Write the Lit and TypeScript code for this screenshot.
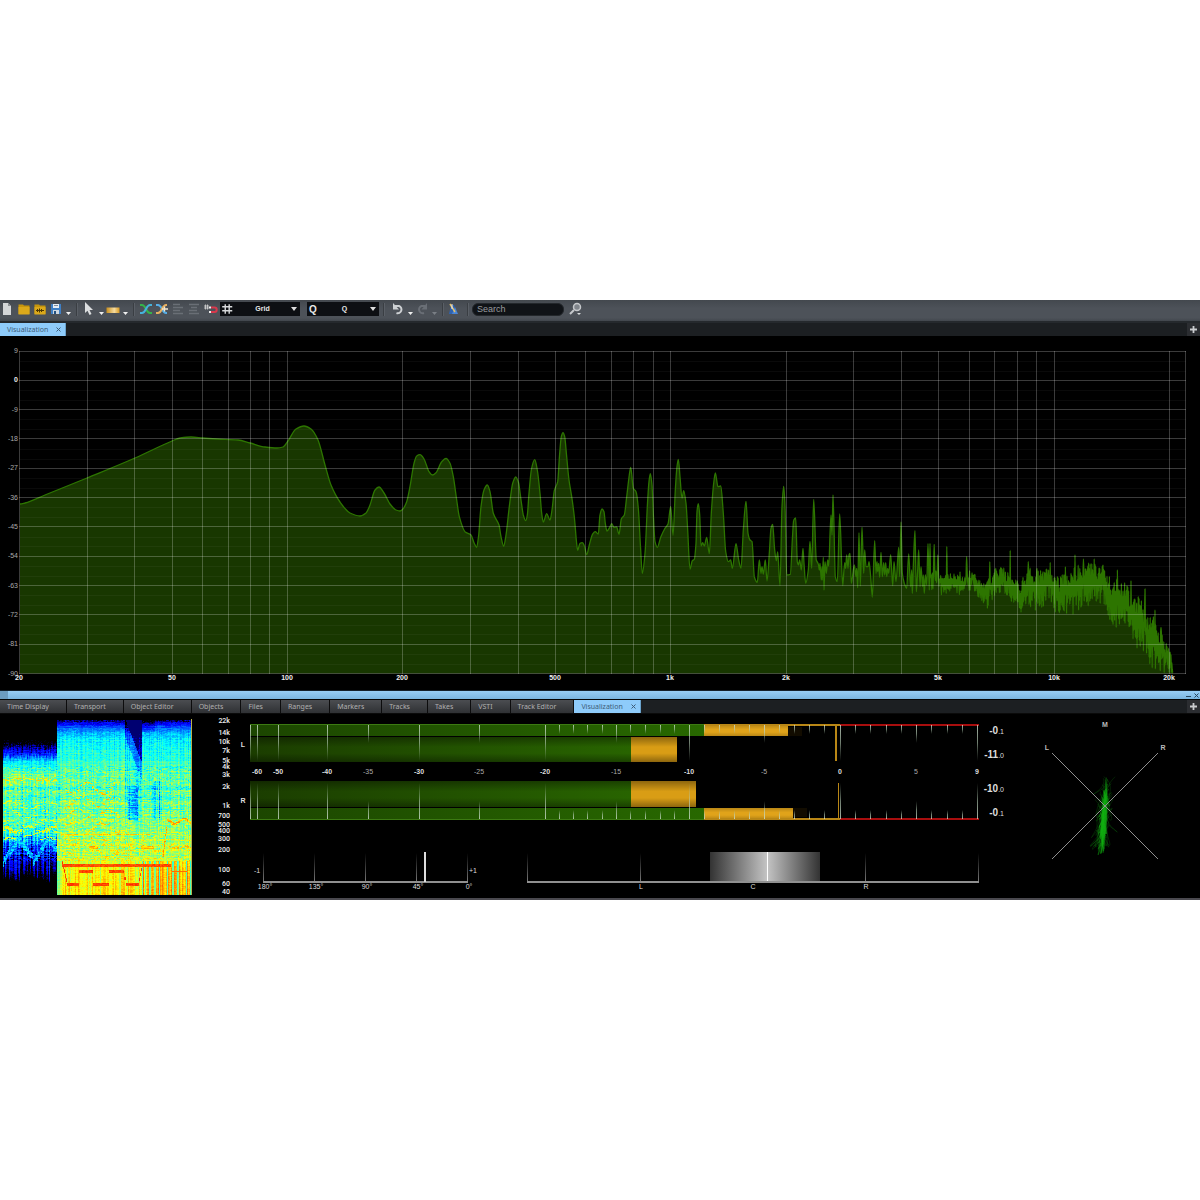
import { LitElement, html, svg, css } from "lit";
import { customElement, state } from "lit/decorators.js";

type Pt = [number, number];

/* Small seeded generator, so that every drawing is stable between loads. */
function seeded(seed: number): () => number {
  let s = seed;
  return () => {
    s = (s * 1664525 + 1013904223) % 4294967296;
    return s / 4294967296;
  };
}

function lerpTable(table: number[][], x: number, col: number): number {
  if (x <= table[0][0]) return table[0][col];
  for (let i = 1; i < table.length; i++) {
    if (x <= table[i][0]) {
      const a = table[i - 1];
      const b = table[i];
      return a[col] + ((b[col] - a[col]) * (x - a[0])) / (b[0] - a[0]);
    }
  }
  return table[table.length - 1][col];
}

/* ---------- Spectrum curve data ---------- */

const LOW_BAND: Pt[] = [
  [20, 504], [25, 503], [45, 495], [87, 478], [135, 458], [172, 441], [180, 438], [191, 437], [203, 438], [217, 439],
  [238, 440], [250, 443], [265, 447], [277, 448], [283, 447], [288, 441], [296, 429], [304, 426], [311, 429],
  [318, 440], [325, 465], [331, 485], [340, 502], [350, 513], [360, 516], [366, 513], [370, 505], [375, 490],
  [379, 487], [384, 493], [390, 504], [396, 510], [400, 511],
];

/* Mid bands are stored in thirds of a unit relative to an origin. */
const MID_BAND: Pt[] = [
  [8, 268], [20, 245], [30, 200], [42, 130], [50, 108], [60, 104], [72, 117], [87, 155], [97, 165], [108, 158],
  [125, 125], [138, 115], [150, 130], [160, 170], [170, 240], [178, 290], [195, 335], [213, 345], [222, 368],
  [230, 382], [236, 345], [243, 260], [252, 210], [262, 195], [270, 215], [280, 280], [297, 315], [303, 350],
  [311, 379], [318, 345], [328, 260], [338, 190], [347, 171], [356, 190], [363, 240], [370, 285], [377, 302],
  [382, 285], [387, 220], [394, 150], [404, 119], [412, 150], [420, 220], [425, 280], [430, 306], [440, 281],
  [450, 300], [456, 270], [463, 212], [473, 185], [479, 100], [484, 50], [489, 38], [494, 50], [500, 110],
  [507, 180], [515, 230], [523, 290], [529, 360], [533, 391], [540, 370], [547, 368], [553, 377], [560, 404],
  [568, 375], [578, 342], [586, 335], [595, 342], [600, 285], [606, 267], [612, 275], [616, 310], [621, 333],
  [629, 322], [635, 311], [642, 322], [650, 321], [657, 343], [664, 297], [673, 285], [680, 230], [688, 165],
  [692, 142], [700, 205], [708, 215], [715, 265], [722, 390], [727, 460], [735, 400], [742, 260], [747, 185],
  [751, 161], [756, 195], [760, 280], [765, 365], [772, 382], [782, 352], [795, 325], [804, 312],
];

const HIGH_BAND: Pt[] = [
  [32, 200], [39, 286], [46, 150], [51, 80], [55, 58], [60, 110], [66, 175], [71, 152], [78, 190], [83, 270],
  [90, 387], [97, 362], [103, 358], [108, 310], [111, 215], [115, 191], [119, 225], [123, 318], [128, 308],
  [133, 318], [140, 292], [148, 341], [154, 220], [160, 140], [166, 99], [174, 140], [182, 138], [190, 220],
  [197, 335], [205, 365], [212, 360], [217, 385], [228, 311], [236, 360], [243, 384], [250, 270], [258, 184],
  [264, 280], [270, 300], [276, 305], [283, 410], [292, 427], [298, 360], [303, 400], [306, 380], [310, 402],
  [316, 360], [321, 423], [328, 340], [333, 265], [338, 253], [344, 330], [349, 362], [353, 336], [360, 437],
  [366, 200], [371, 139], [375, 200], [380, 405], [391, 403], [397, 300], [401, 241], [407, 234], [412, 365],
  [415, 375], [419, 360], [424, 390], [429, 325], [432, 370], [437, 430], [445, 390], [450, 304], [455, 385],
  [461, 178], [469, 360], [475, 372], [478, 390], [480, 370], [484, 420], [486, 380], [487, 420], [490, 352],
  [492, 450], [495, 365], [499, 400], [503, 360], [506, 378], [513, 225], [516, 285], [519, 165], [526, 410],
  [532, 425], [539, 222], [548, 437], [554, 368], [557, 385], [560, 345], [564, 385], [567, 345], [570, 340],
  [574, 430], [583, 375], [588, 410], [590, 385], [593, 443], [597, 278], [601, 438], [606, 262], [611, 400],
  [614, 330], [618, 380], [624, 380], [627, 365], [632, 410], [637, 472], [644, 302], [648, 400], [651, 365],
  [653, 395], [656, 370], [659, 412], [663, 337], [667, 410], [671, 368], [674, 405], [677, 368], [680, 410],
  [683, 385], [686, 400], [692, 344], [698, 437], [702, 365], [708, 425], [716, 322], [719, 410], [723, 246],
  [727, 400], [733, 430], [740, 445], [746, 342], [752, 440], [755, 390], [757, 460], [760, 380], [765, 272],
  [769, 455], [773, 390], [776, 330], [780, 440], [783, 380], [788, 440], [790, 405], [793, 460], [796, 405],
  [800, 435], [804, 311], [808, 450],
];

const NOISE_RANGE = [
  [30, 190, 275], [60, 205, 285], [100, 215, 280], [135, 215, 290], [160, 205, 270], [170, 240, 290], [200, 240, 330],
  [225, 205, 290], [250, 195, 280], [270, 225, 305], [300, 245, 345], [325, 200, 320], [350, 210, 345],
  [390, 195, 305], [410, 230, 350], [440, 210, 350], [465, 185, 345], [490, 185, 315], [520, 190, 325],
  [550, 195, 310], [580, 230, 390], [610, 245, 370], [640, 262, 440], [665, 290, 465], [690, 335, 505],
  [712, 365, 520], [740, 425, 520], [757, 470, 520],
];

const NOISE_PEAKS: Pt[] = [
  [24, 130], [42, 133], [53, 165], [79, 139], [138, 170], [209, 185], [270, 151], [324, 185], [350, 205], [390, 187],
  [436, 200], [464, 165], [490, 177], [522, 177], [548, 195], [591, 210], [633, 242], [675, 267], [705, 330],
  [722, 382], [757, 466],
];

function spectrumPoints(): Pt[] {
  const pts: Pt[] = [...LOW_BAND];
  MID_BAND.forEach(([x, y]) => pts.push([400 + x / 3, 420 + y / 3]));
  HIGH_BAND.forEach(([x, y]) => pts.push([660 + x / 3, 440 + y / 3]));
  const rnd = seeded(41);
  let up = true;
  let next = 0;
  for (let x = 30; x < 757; x += x < 160 ? 1.8 : 1.2) {
    const hi = lerpTable(NOISE_RANGE, x, 1);
    const lo = lerpTable(NOISE_RANGE, x, 2);
    const span = lo - hi;
    let y = up ? hi + span * 0.42 * rnd() : lo - span * 0.5 * rnd();
    if (next < NOISE_PEAKS.length && x >= NOISE_PEAKS[next][0]) {
      y = NOISE_PEAKS[next][1];
      next++;
    }
    pts.push([920 + x / 3, Math.min(673, 500 + y / 3)]);
    up = !up;
  }
  pts.push([1173, 673]);
  return pts;
}

/* Monotone cubic path: peaks stay rounded and never overshoot. */
function curvePath(pts: Pt[]): string {
  const n = pts.length;
  const d: number[] = [];
  for (let i = 0; i < n - 1; i++) d.push((pts[i + 1][1] - pts[i][1]) / (pts[i + 1][0] - pts[i][0] || 0.1));
  const m = pts.map((_, i) => {
    if (i === 0 || i === n - 1 || d[i - 1] * d[i] <= 0) return 0;
    return (2 * d[i - 1] * d[i]) / (d[i - 1] + d[i]);
  });
  let out = `M${pts[0][0]} ${pts[0][1]}`;
  for (let i = 0; i < n - 1; i++) {
    const [x0, y0] = pts[i];
    const [x1, y1] = pts[i + 1];
    const h = (x1 - x0) / 3;
    out += `C${(x0 + h).toFixed(1)} ${(y0 + m[i] * h).toFixed(1)} ${(x1 - h).toFixed(1)} ${(y1 - m[i + 1] * h).toFixed(1)} ${x1.toFixed(1)} ${y1.toFixed(1)}`;
  }
  return out;
}

const freqX = (f: number) => 19.5 + 383.4 * Math.log10(f / 20);
const levelY = (db: number) => 351 + (9 - db) * 3.258;

@customElement("spectrum-chart")
export class SpectrumChart extends LitElement {
  static styles = css`
    :host { display: block; background: #000; }
    svg { display: block; width: 100%; height: auto; }
    .major { stroke: #fff; stroke-opacity: 0.23; stroke-width: 1; }
    .minor { stroke: #fff; stroke-opacity: 0.04; stroke-width: 1; }
    .area { fill: #183700; }
    .curve { fill: none; stroke: #2d7500; stroke-width: 1.3; stroke-linejoin: round; }
    .level { font: 7px "Liberation Sans", Arial, sans-serif; fill: #aaa; text-anchor: end; }
    .level.zero { font-weight: 700; fill: #eee; }
    .freq { font: 700 7px "Liberation Sans", Arial, sans-serif; fill: #eee; text-anchor: middle; }
  `;

  render() {
    const path = curvePath(spectrumPoints());
    const freqs: number[] = [];
    for (const decade of [10, 100, 1000, 10000]) {
      for (let k = 1; k < 10; k++) {
        const f = k * decade;
        if (f >= 20 && f <= 20000) freqs.push(f);
      }
    }
    freqs.push(22050);
    const minor: number[] = [];
    const major: number[] = [];
    for (let db = 9; db >= -90; db -= 3) (db % 9 === 0 ? major : minor).push(db);
    const names: [number, string][] = [
      [20, "20"], [50, "50"], [100, "100"], [200, "200"], [500, "500"], [1000, "1k"], [2000, "2k"], [5000, "5k"],
      [10000, "10k"], [20000, "20k"],
    ];
    return html`<svg viewBox="0 336 1200 354" role="img" aria-label="Spectrum">
      <path class="area" d="${path}L1173 673.5L20 673.5Z"></path>
      ${minor.map((db) => svg`<line class="minor" x1="20" x2="1186" y1=${Math.round(levelY(db)) + 0.5} y2=${Math.round(levelY(db)) + 0.5}></line>`)}
      <path class="curve" d=${path}></path>
      ${major.map((db) => svg`<line class="major" x1="19" x2="1186" y1=${Math.floor(levelY(db)) + 0.5} y2=${Math.floor(levelY(db)) + 0.5}></line>`)}
      ${freqs.map((f) => svg`<line class="major" y1="351" y2="674" x1=${Math.floor(freqX(f)) + 0.5} x2=${Math.floor(freqX(f)) + 0.5}></line>`)}
      ${major.map((db) => svg`<text class="level ${db === 0 ? "zero" : ""}" x="18" y=${Math.round(levelY(db)) + 2}>${db}</text>`)}
      ${names.map(([f, t]) => svg`<text class="freq" x=${Math.floor(freqX(f))} y="680">${t}</text>`)}
    </svg>`;
  }
}

/* ---------- Spectrogram ---------- */

const QUIET_PART = [
  [740, 0], [743, 0.03], [748, 0.1], [754, 0.16], [758, 0.32], [766, 0.41], [774, 0.49], [780, 0.53], [788, 0.47],
  [810, 0.46], [830, 0.46], [838, 0.36], [846, 0.2], [858, 0.14], [868, 0.09], [876, 0.02], [884, 0], [895, 0],
];
const LOUD_PART = [
  [720, 0.06], [724, 0.14], [730, 0.27], [738, 0.36], [755, 0.41], [772, 0.46], [790, 0.46], [812, 0.49],
  [835, 0.54], [855, 0.55], [861, 0.61], [872, 0.64], [895, 0.66],
];

function heat(v: number): [number, number, number] {
  if (v <= 0.02) return [0, 0, 0];
  const c = (t: number) => Math.max(0, Math.min(1, t));
  const r = c(1.5 - Math.abs(4 * v - 3));
  const g = c(1.5 - Math.abs(4 * v - 2));
  const b = c(1.5 - Math.abs(4 * v - 1));
  const dim = v < 0.1 ? v / 0.1 : 1;
  return [r * 255, g * 255, b * 255 * dim];
}

@customElement("spectrogram-view")
export class SpectrogramView extends LitElement {
  static styles = css`
    :host { display: block; }
    canvas { display: block; width: 100%; height: auto; }
  `;

  render() {
    return html`<canvas width="192" height="184" role="img" aria-label="Spectrogram"></canvas>`;
  }

  firstUpdated() {
    const canvas = this.renderRoot.querySelector("canvas")!;
    const ctx = canvas.getContext("2d")!;
    const img = ctx.createImageData(192, 184);
    const rnd = seeded(7);
    const colNoise = Array.from({ length: 192 }, () => rnd() - 0.5);
    const colDrop = Array.from({ length: 192 }, () => rnd());
    const rowNoise = Array.from({ length: 184 }, () => rnd() - 0.5);
    const melody = (x: number) => {
      if (x < 62) return 0;
      if (x < 67) return 862 + (x - 62) * 4.4;
      if (x < 79) return 884;
      if (x < 93) return 871;
      if (x < 109) return 884;
      if (x < 124) return 871;
      if (x < 126) return 878;
      if (x < 138) return 884;
      if (x < 142) return 884 - (x - 138) * 5;
      return 0;
    };
    const saw = (x: number) => {
      const t = (x - 3) % 30;
      return t < 15 ? 868 - t * 1.5 : 846 + (t - 15) * 1.2;
    };
    for (let py = 6; py < 181; py++) {
      let hold = 0;
      for (let px = 3; px < 191; px++) {
        const y = 714 + py;
        const x = px;
        const quiet = x < 57;
        if (rnd() < 0.55) hold = rnd() - 0.5;
        let v = quiet
          ? lerpTable(QUIET_PART, y - 6 * colNoise[px] + (y > 850 ? 8 * (0.5 - ((x + 10) % 30) / 30) : 0), 1)
          : lerpTable(LOUD_PART, y - 4 * colNoise[px], 1);
        if (v > 0.03) {
          v += hold * (y > 860 ? 0.06 : y > 765 ? 0.17 : 0.08) + colNoise[px] * 0.1;
          v += rowNoise[py] * (y > 860 ? 0.02 : y > 785 ? 0.09 : 0.04);
          if (quiet && colDrop[px] > 0.7) v -= y > 835 ? 0.06 : 0.04;
        }
        if (quiet) {
          const upper = 826 + 5 * Math.abs(Math.sin((x - 4) / 8)) + 3 * colNoise[px];
          if (Math.abs(y - upper) < 1.2 && hold > -0.3) v = 0.6 + hold * 0.14;
          const lower = saw(x) + 4 * colNoise[px] - 6;
          if (Math.abs(y - lower) < 3) v = Math.max(v, 0.3 + hold * 0.16);
          if (Math.abs(y - 779) < 1.2 && hold > 0) v = 0.6 + hold * 0.15;
          if (y > 800 && y < 840 && Math.abs(((y + 4 * Math.sin(x / 6)) % 9) - 4) < 1 && hold > 0.1) v = 0.6;
        } else {
          if (x > 124 && x < 142) {
            const tip = 722 + (x - 126) * 2.6;
            if (y < tip) v = Math.max(0.06, v - 0.28);
            else if (y < tip + 18) v -= 0.14;
            else if (y < 822) v -= 0.05;
            if (y > 785 && y < 820 && x > 127 && x < 138) v -= (rowNoise[py] > 0 ? 0.16 : 0.05);
          }
          if (y < 732 && x > 141 && x < 155) v -= 0.06;
          if (x >= 152 && x < 162 && y > 780 && y < 820) v -= 0.16 * colDrop[px];
          if (y > 776 && y < 862 && x > 64 && x < 120) {
            for (let k = 0; k < 6; k++) {
              const band = 788 + k * 13 + 5 * Math.sin(x / 5 + k) + 3 * colNoise[px];
              if (Math.abs(y - band) < 1.2 && hold > 0) v = 0.6 + hold * 0.2;
            }
          }
          if (Math.abs(y - 834) < 1 && x > 60 && x < 150) v = 0.66 + hold * 0.12;
          if (Math.abs(y - 847) < 2 && ((x > 88 && x < 98) || (x > 140 && x < 154))) v = 0.69 + hold * 0.12;
          if (x > 162) {
            const swell = x < 167 ? 860 - (x - 162) * 7.6 : 821 + 2.5 * Math.sin(x / 3);
            if (Math.abs(y - swell) < (x < 167 ? 4 : 1.4)) v = 0.69 + hold * 0.12;
            if (x > 168 && Math.abs(y - 847) < 1.4 && hold > -0.2) v = 0.66 + hold * 0.12;
          }
          if (y > 860) {
            if (colDrop[px] > 0.72) v -= x > 141 ? 0.18 : 0.07;
            if (x > 141 && colDrop[px] < 0.5) v += 0.07;
            if (x < 62) v -= 0.1;
          }
          if (Math.abs(y - 865) < 1.4 && x > 61 && x < 171) v = 0.8 + hold * 0.06;
          if (x > 171 && x < 187 && Math.abs(y - 871) < 1) v = 0.77;
          const my = melody(x);
          if (my && Math.abs(y - my) < 2) v = 0.81 + hold * 0.06;
        }
        const i = (py * 192 + px) * 4;
        const [r, g, b] = heat(Math.min(0.84, v));
        img.data[i] = r;
        img.data[i + 1] = g;
        img.data[i + 2] = b;
        img.data[i + 3] = 255;
      }
    }
    ctx.putImageData(img, 0, 0);
    ctx.fillStyle = "#b5b04a";
    ctx.fillRect(191, 5, 1, 176);
  }
}

@customElement("frequency-scale")
export class FrequencyScale extends LitElement {
  static styles = css`
    :host { display: block; }
    svg { display: block; width: 100%; height: auto; }
    text { font: 500 7px Roboto, "Liberation Sans", sans-serif; fill: #eee; text-anchor: end; }
  `;
  render() {
    const marks: [string, number][] = [
      ["22k", 723], ["14k", 735], ["10k", 744], ["7k", 753], ["5k", 763], ["4k", 769], ["3k", 777], ["2k", 789],
      ["1k", 808], ["700", 818], ["500", 827], ["400", 833], ["300", 841], ["200", 852], ["100", 872], ["60", 886],
      ["40", 894],
    ];
    return html`<svg viewBox="192 714 48 184" role="img" aria-label="Frequency scale">
      ${marks.map(([t, y]) => svg`<text x="230" y=${y}>${t}</text>`)}
    </svg>`;
  }
}

/* ---------- Level, phase and balance meters ---------- */

const SCALE: [number, string, boolean][] = [
  [257, "-60", true], [278, "-50", true], [327, "-40", true], [368, "-35", false], [419, "-30", true],
  [479, "-25", false], [545, "-20", true], [616, "-15", false], [689, "-10", true], [764, "-5", false],
  [840, "0", true], [916, "5", false], [977, "9", true],
];
const UNIT_TICKS = [
  559, 573, 587, 602, 630, 645, 660, 674, 704, 719, 734, 749, 779, 794, 809, 824, 855, 870, 886, 901, 931, 947, 962,
];

@customElement("level-meters")
export class LevelMeters extends LitElement {
  static styles = css`
    :host { display: block; }
    svg { display: block; width: 100%; height: auto; }
    text { font: 7px "Liberation Sans", Arial, sans-serif; fill: #ddd; text-anchor: middle; }
    text.strong { font-weight: 700; fill: #ddd; }
    text.soft { fill: #aaa; }
    text.readout { font-size: 10px; font-weight: 700; fill: #ddd; text-anchor: end; }
    .decimal { font-size: 7px; font-weight: 400; }
    .baseline { fill: #909090; }
    .edge-amber { fill: #b98716; }
    .edge-red { fill: #a80e0e; }
    .edge-green { fill: #3c7a12; }
  `;

  private ticks(down: boolean) {
    const fill = down ? "url(#fade-down)" : "url(#fade-up)";
    const y = (h: number) => (down ? 725 : 819 - h);
    return svg`
      <rect x="250" y=${y(36)} width="1" height="36" fill=${fill}></rect>
      ${SCALE.map(([x, , big]) => svg`<rect x=${x} y=${y(big ? 36 : 18)} width="1" height=${big ? 36 : 18} fill=${fill}></rect>`)}
      ${UNIT_TICKS.map((x) => svg`<rect x=${x} y=${y(9)} width="1" height="9" fill=${fill}></rect>`)}`;
  }

  render() {
    return html`<svg viewBox="240 714 780 184" role="img" aria-label="Peak meter, phase correlation and stereo balance">
      <defs>
        <linearGradient id="fade-down" x1="0" y1="0" x2="0" y2="1">
          <stop offset="0" stop-color="#cfe0cf" stop-opacity="0.8"></stop>
          <stop offset="0.5" stop-color="#b8d0b8" stop-opacity="0.6"></stop>
          <stop offset="1" stop-color="#9ab09a" stop-opacity="0"></stop>
        </linearGradient>
        <linearGradient id="fade-up" x1="0" y1="1" x2="0" y2="0">
          <stop offset="0" stop-color="#cfe0cf" stop-opacity="0.8"></stop>
          <stop offset="0.5" stop-color="#b8d0b8" stop-opacity="0.6"></stop>
          <stop offset="1" stop-color="#9ab09a" stop-opacity="0"></stop>
        </linearGradient>
        <linearGradient id="fade-grey" x1="0" y1="1" x2="0" y2="0">
          <stop offset="0" stop-color="#777"></stop>
          <stop offset="1" stop-color="#777" stop-opacity="0"></stop>
        </linearGradient>
        <linearGradient id="rms-green" x1="0" y1="0" x2="1" y2="0">
          <stop offset="0" stop-color="#1b3d00"></stop>
          <stop offset="1" stop-color="#286400"></stop>
        </linearGradient>
        <linearGradient id="peak-green" x1="0" y1="0" x2="1" y2="0">
          <stop offset="0" stop-color="#1c4600"></stop>
          <stop offset="1" stop-color="#286800"></stop>
        </linearGradient>
        <linearGradient id="tube" x1="0" y1="0" x2="0" y2="1">
          <stop offset="0" stop-color="#000" stop-opacity="0.35"></stop>
          <stop offset="0.4" stop-color="#000" stop-opacity="0"></stop>
          <stop offset="0.65" stop-color="#000" stop-opacity="0"></stop>
          <stop offset="1" stop-color="#000" stop-opacity="0.35"></stop>
        </linearGradient>
        <linearGradient id="balance" x1="0" y1="0" x2="1" y2="0">
          <stop offset="0" stop-color="#333"></stop>
          <stop offset="0.52" stop-color="#c4c4c4"></stop>
          <stop offset="1" stop-color="#333"></stop>
        </linearGradient>
      </defs>

      <rect x="250" y="724" width="454" height="12" fill="url(#peak-green)"></rect>
      <rect x="704" y="725" width="84" height="11" fill="#e0a31a"></rect>
      <rect x="788" y="727" width="14" height="9" fill="#120c00"></rect>
      <rect x="704" y="725" width="84" height="11" fill="url(#tube)" opacity="0.5"></rect>
      <rect x="250" y="737" width="381" height="25" fill="url(#rms-green)"></rect>
      <rect x="631" y="737" width="46" height="25" fill="#d99d15"></rect>
      <rect x="250" y="737" width="427" height="25" fill="url(#tube)"></rect>

      <rect x="250" y="781" width="381" height="26" fill="url(#rms-green)"></rect>
      <rect x="631" y="781" width="65" height="26" fill="#d99d15"></rect>
      <rect x="250" y="781" width="446" height="26" fill="url(#tube)"></rect>
      <rect x="250" y="808" width="454" height="12" fill="url(#peak-green)"></rect>
      <rect x="704" y="808" width="89" height="11" fill="#e0a31a"></rect>
      <rect x="704" y="808" width="89" height="11" fill="url(#tube)" opacity="0.5"></rect>
      <rect x="793" y="808" width="14" height="9" fill="#120c00"></rect>

      <rect class="edge-green" x="250" y="724" width="454" height="1"></rect>
      <rect class="edge-green" x="250" y="819" width="454" height="1"></rect>
      <rect class="edge-amber" x="704" y="724" width="136" height="2"></rect>
      <rect class="edge-amber" x="704" y="818" width="136" height="2"></rect>
      <rect class="edge-red" x="840" y="724" width="139" height="2"></rect>
      <rect class="edge-red" x="840" y="818" width="139" height="2"></rect>
      ${this.ticks(true)} ${this.ticks(false)}
      <rect class="edge-amber" x="835" y="725" width="2" height="36"></rect>
      <rect class="edge-amber" x="838" y="783" width="1" height="36"></rect>

      <text class="strong" x="243" y="747">L</text>
      <text class="strong" x="243" y="803">R</text>
      ${SCALE.map(([x, t, big]) => svg`<text class=${big ? "strong" : "soft"} x=${x} y="774">${t}</text>`)}

      <text class="readout" x="1004" y="734">-0<tspan class="decimal">.1</tspan></text>
      <text class="readout" x="1004" y="758">-11<tspan class="decimal">.0</tspan></text>
      <text class="readout" x="1004" y="792">-10<tspan class="decimal">.0</tspan></text>
      <text class="readout" x="1004" y="816">-0<tspan class="decimal">.1</tspan></text>

      ${[263, 314, 365, 416, 467].map((x) => svg`<rect x=${x} y="853" width="1" height="28" fill="url(#fade-grey)"></rect>`)}
      <rect class="baseline" x="263" y="881" width="205" height="2"></rect>
      <rect x="424" y="852" width="2" height="30" fill="#ddd"></rect>
      <text x="257" y="873">-1</text>
      <text x="473" y="873">+1</text>
      <text x="265" y="889">180°</text>
      <text x="316" y="889">135°</text>
      <text x="367" y="889">90°</text>
      <text x="418" y="889">45°</text>
      <text x="469" y="889">0°</text>

      ${[527, 640, 865, 978].map((x) => svg`<rect x=${x} y="853" width="1" height="28" fill="url(#fade-grey)"></rect>`)}
      <rect x="710" y="852" width="110" height="29" fill="url(#balance)"></rect>
      <rect x="767" y="852" width="1" height="29" fill="#fff"></rect>
      <rect class="baseline" x="527" y="881" width="452" height="2"></rect>
      <text x="641" y="889">L</text>
      <text x="753" y="889">C</text>
      <text x="866" y="889">R</text>
    </svg>`;
  }
}

@customElement("phase-scope")
export class PhaseScope extends LitElement {
  static styles = css`
    :host { display: block; }
    svg { display: block; width: 100%; height: auto; }
    text { font: 700 7px "Liberation Sans", Arial, sans-serif; fill: #bbb; text-anchor: middle; }
    .axis { stroke: #8f8f8f; stroke-width: 1; }
    .trace { fill: none; stroke: #18b818; stroke-width: 0.8; stroke-opacity: 0.22; }
    .core { fill: none; stroke: #12b012; stroke-width: 1; stroke-opacity: 0.4; }
  `;

  /* One looping stroke: start and end drift along a slightly tilted vertical axis. */
  private trace(rnd: () => number, spread: number, top: number, bottom: number): string {
    const point = (y: number) => {
      const x = 1104.5 - (y - 810) * 0.07 + (rnd() + rnd() - 1) * spread;
      return `${x.toFixed(1)} ${y.toFixed(1)}`;
    };
    const a = top + (bottom - top) * rnd() * 0.8;
    const len = 12 + rnd() * 24;
    const b = Math.min(bottom, a + len);
    return `M${point(a)}C${point(a + len * 0.2)} ${point((a + b) / 2)} ${point(b)}S${point(b - 4)} ${point(Math.max(top, b - 14))}`;
  }

  render() {
    const rnd = seeded(99);
    const loose = Array.from({ length: 44 }, () => this.trace(rnd, 11, 774, 844));
    const tight = Array.from({ length: 34 }, () => this.trace(rnd, 4, 776, 849));
    return html`<svg viewBox="1020 714 180 184" role="img" aria-label="Phase scope">
      ${loose.map((d) => svg`<path class="trace" d=${d}></path>`)}
      ${tight.map((d) => svg`<path class="core" d=${d}></path>`)}
      <line class="axis" x1="1052" y1="753" x2="1158" y2="859"></line>
      <line class="axis" x1="1158" y1="753" x2="1052" y2="859"></line>
      <text x="1105" y="727">M</text>
      <text x="1047" y="750">L</text>
      <text x="1163" y="750">R</text>
    </svg>`;
  }
}

/* ---------- Toolbar icons ---------- */

const fileIcon = svg`<path d="M3 2h5l3 3v9H3z" fill="#d4d6d8"></path><path d="M8 2v3h3z" fill="#8b8f93"></path>`;
const folderIcon = svg`<path d="M3 3.500h4l1 1h5.500V13H2.500V3.500z" fill="#c8960c"></path><path d="M2.500 6h11v7.500h-11z" fill="#dca91a"></path>`;
const projectIcon = svg`<path d="M3 3.500h4l1 1h5.500V13H2.500V3.500z" fill="#c8960c"></path><path d="M2.500 6h11v7.500h-11z" fill="#dca91a"></path><path d="M4 9.500h8M5.500 8v3M7.500 7.500v4M9.500 8v3" stroke="#4f3800" fill="none"></path>`;
const saveIcon = svg`<path d="M3 3h10v10H3z" fill="#3f7fc4"></path><path d="M5 3h6v4H5z" fill="#e8edf2"></path><path d="M6 4.500h4" stroke="#7d8da0"></path><path d="M5 9h6v4H5z" fill="#cdd6df"></path><path d="M6 10h2v3H6z" fill="#24507e"></path>`;
const pointerIcon = svg`<path d="M4 1v11l2.500-2.200L8.500 14l2-1-2-4h3.500z" fill="#dcdee0"></path>`;
const objectIcon = svg`<defs><linearGradient id="amber"><stop offset="0" stop-color="#c98f1c"></stop><stop offset="0.6" stop-color="#f6dca0"></stop><stop offset="1" stop-color="#d99a20"></stop></linearGradient></defs><path d="M1.500 6.500h13v5.500h-13z" fill="url(#amber)"></path>`;
const crossfadeIcon = svg`<path d="M2 4h2c4 0 4 8 8 8h2" stroke="#35b34a" stroke-width="2" fill="none"></path><path d="M2 12h2c4 0 4-8 8-8h2" stroke="#45b3dc" stroke-width="2" fill="none"></path>`;
const crossfadeEditIcon = svg`<path d="M2 4h2c4 0 4 8 8 8h1" stroke="#56aee6" stroke-width="2" fill="none"></path><path d="M2 12h2c4 0 4-8 8-8h1" stroke="#e8b060" stroke-width="2" fill="none"></path><path d="M8 8h6M10.500 5.500v5" stroke="#f3e7d0" stroke-width="1.400" fill="none"></path>`;
const alignLeftIcon = svg`<path d="M3 3.500h7M3 6.500h10M3 9.500h7M3 12.500h10" stroke="#6a6f76" stroke-width="1.400" fill="none"></path>`;
const alignRightIcon = svg`<path d="M3 3.500h10M5 6.500h6M3 9.500h8M3 12.500h10" stroke="#6a6f76" stroke-width="1.400" fill="none"></path>`;
const magnetIcon = svg`<path d="M3.500 3.500v5M5.500 3.500v5M2 5h5M2 7h5" stroke="#d8d8d8" stroke-width="0.8" fill="none"></path><path d="M9 6.500h3.500a2.200 2.200 0 0 1 0 4.400H9" stroke="#d8384c" stroke-width="2" fill="none"></path><path d="M7 6.500h2M7 10.900h2" stroke="#eee" stroke-width="2"></path>`;
const undoIcon = svg`<path d="M5 5h4a3.700 3.700 0 1 1-2.500 7" stroke="#cdd0d3" stroke-width="2" fill="none"></path><path d="M3 2v6.500h6z" fill="#cdd0d3"></path>`;
const redoIcon = svg`<path d="M11 5H7.500a3.700 3.700 0 1 0 2.500 7" stroke="#6a6f76" stroke-width="2" fill="none"></path><path d="M13 2v6.500H7.500z" fill="#6a6f76"></path>`;
const metronomeIcon = svg`<path d="M2 13l2-9h3l3 9z" fill="#2f63b0"></path><path d="M8 6l3 7H5z" fill="#4a86d8"></path><path d="M3 3l5 8" stroke="#e6c068" stroke-width="1.500"></path><path d="M5 3v5" stroke="#e8e8e8"></path>`;
const searchIcon = svg`<circle cx="9" cy="6" r="3.500" stroke="#c5c8cb" stroke-width="1.500" fill="#80858b"></circle><path d="M6 9l-4 4" stroke="#c5c8cb" stroke-width="2"></path><path d="M9 12h4l-2 2z" fill="#d8dadc"></path>`;
const gridIcon = svg`<path d="M6 2.500v11M10.500 2.500v11M2.500 5.500h11.500M2.500 10h11.500" stroke="#d8dadc" stroke-width="1.600" fill="none"></path>`;

@customElement("app-root")
export class AppRoot extends LitElement {
  static styles = css`
    :host {
      display: flex;
      flex-direction: column;
      justify-content: center;
      min-height: 100vh;
      box-sizing: border-box;
      background: #fff;
      font-family: "Noto Sans", "Open Sans", sans-serif;
      font-size: 7px;
    }
    button, input, select { font: inherit; color: inherit; margin: 0; padding: 0; border: 0; background: none; border-radius: 0; }
    svg { display: block; }
    .window { background: #000; border-bottom: 2px solid #4a494f; }

    .toolbar {
      display: flex;
      align-items: center;
      height: 18px;
      padding-bottom: 3px;
      border-bottom: 2px solid #25292d;
      background: linear-gradient(#43484e, #4d5259 40%, #4d5259 85%, #42474d);
      overflow: hidden;
    }
    .tool { width: 16px; height: 16px; flex: none; }
    .tool svg { width: 16px; height: 16px; }
    .more { width: 8px; height: 16px; flex: none; display: flex; align-items: flex-end; justify-content: center; padding-bottom: 2px; box-sizing: border-box; color: #f0f0f0; }
    .more.off { color: #7a7f85; }
    .more svg, .field svg.drop { width: 5px; height: 3px; flex: none; }
    .field svg.drop { width: 6px; height: 4px; }
    .divider { width: 9px; height: 13px; flex: none; display: flex; justify-content: center; }
    .divider::before { content: ""; width: 1px; background: #3a3e43; border-right: 1px solid #5a5f66; }
    .gap { margin-left: 2px; }
    .field {
      display: flex;
      align-items: center;
      height: 14px;
      width: 80px;
      padding-right: 3px;
      box-sizing: border-box;
      margin-left: 2px;
      background: #0d0f13;
      color: #e8e8e8;
      font: 700 7px "Liberation Sans", Arial, sans-serif;
    }
    .field.small { width: 72px; margin-left: 7px; }
    .field select { flex: 1; min-width: 0; appearance: none; text-align: center; text-align-last: center; height: 14px; line-height: 14px; }
    .field option { color: #000; }
    .field svg.mark { width: 14px; height: 14px; flex: none; }
    .letter { width: 12px; text-align: center; font-size: 10px; }
    .search {
      width: 92px;
      height: 13px;
      box-sizing: border-box;
      border-radius: 6px;
      padding: 0 4px;
      margin-right: 4px;
      background: #101317;
      border: 1px solid #23272b;
      color: #ddd;
      font: 9px "Liberation Sans", Arial, sans-serif;
    }
    .search::placeholder { color: #9a9c9f; opacity: 1; }

    .tabs { display: flex; height: 13px; background: #1c1f22; }
    .tabs.lower { border-top: 1px solid #050505; border-bottom: 1px solid #0a0a0a; }
    .tab {
      display: flex;
      align-items: center;
      flex: none;
      padding: 0 17px 0 7px;
      border-right: 1px solid #0c0c0d;
      background: linear-gradient(#4b4d51, #2f3134);
      color: #b0b0b0;
      white-space: nowrap;
    }
    .tab.active { background: #8ecbfa; color: #3d5c77; border-right-color: #6aa2cc; padding-right: 4px; gap: 8px; }
    .tab svg { width: 5px; height: 5px; }
    .add { margin-left: auto; width: 13px; display: flex; align-items: center; justify-content: center; background: #2b2d31; color: #c9cbce; }
    .add svg { width: 7px; height: 7px; }

    .splitter {
      display: flex;
      justify-content: flex-end;
      align-items: center;
      gap: 3px;
      height: 9px;
      box-sizing: border-box;
      padding-right: 1px;
      border-top: 1px solid #14202b;
      background: linear-gradient(90deg, #6c9cc0 8px, transparent 8px), linear-gradient(#98cef6, #7ab5e0);
      color: #27465f;
    }
    .splitter button { width: 5px; height: 5px; }
    .splitter svg { width: 5px; height: 5px; }

    .analysis { display: grid; grid-template-columns: 192fr 48fr 780fr 180fr; }
  `;

  @state() private grid = "Grid";

  private readonly panels = [
    "Time Display", "Transport", "Object Editor", "Objects", "Files", "Ranges", "Markers", "Tracks", "Takes", "VSTI",
    "Track Editor",
  ];

  private tool(label: string, icon: unknown) {
    return html`<button class="tool" aria-label=${label}><svg viewBox="0 0 16 16">${icon}</svg></button>`;
  }
  private more(label: string, off = false) {
    return html`<button class="more ${off ? "off" : ""}" aria-label=${label} ?disabled=${off}>
      <svg viewBox="0 0 5 3"><path d="M0 0h5L2.500 3z" fill="currentColor"></path></svg>
    </button>`;
  }
  private close() {
    return html`<svg viewBox="0 0 5 5"><path d="M0.500 0.500l4 4M4.500 0.500l-4 4" stroke="currentColor" fill="none"></path></svg>`;
  }
  private add() {
    return html`<button class="add" aria-label="Add tab"><svg viewBox="0 0 7 7"><path d="M3.500 0v7M0 3.500h7" stroke="currentColor" stroke-width="1.800"></path></svg></button>`;
  }

  render() {
    const drop = html`<svg class="drop" viewBox="0 0 6 4"><path d="M0 0h6L3 4z" fill="#ddd"></path></svg>`;
    const divider = html`<span class="divider"></span>`;
    return html`<main class="window">
      <div class="toolbar" role="toolbar">
        ${this.tool("New", fileIcon)} ${this.tool("Open", folderIcon)} ${this.tool("Open project", projectIcon)}
        ${this.tool("Save", saveIcon)} ${this.more("Save options")} ${divider}
        ${this.tool("Pointer", pointerIcon)} ${this.more("Pointer modes")}
        ${this.tool("Object mode", objectIcon)} ${this.more("Object modes")} ${divider}
        ${this.tool("Crossfade", crossfadeIcon)} ${this.tool("Edit crossfade", crossfadeEditIcon)}
        ${this.tool("Align left", alignLeftIcon)} ${this.tool("Align right", alignRightIcon)}
        ${this.tool("Snap to grid", magnetIcon)}
        <label class="field">
          <svg class="mark" viewBox="0 0 16 16">${gridIcon}</svg>
          <select aria-label="Grid" .value=${this.grid} @change=${(e: Event) => (this.grid = (e.target as HTMLSelectElement).value)}>
            <option>Grid</option>
          </select>
          ${drop}
        </label>
        <label class="field small">
          <span class="letter">Q</span>
          <select aria-label="Quantize"><option>Q</option></select>
          ${drop}
        </label>
        ${divider}<span class="gap"></span>
        ${this.tool("Undo", undoIcon)} ${this.more("Undo history")} ${this.tool("Redo", redoIcon)}
        ${this.more("Redo history", true)} ${divider} ${this.tool("Metronome", metronomeIcon)} ${divider}
        <input class="search" type="text" placeholder="Search" aria-label="Search" />
        ${this.tool("Find", searchIcon)}
      </div>
      <nav class="tabs">
        <button class="tab active">Visualization ${this.close()}</button>
        ${this.add()}
      </nav>
      <spectrum-chart></spectrum-chart>
      <div class="splitter">
        <button aria-label="Minimize"><svg viewBox="0 0 5 5"><path d="M0 3.500h5" stroke="currentColor"></path></svg></button>
        <button aria-label="Close">${this.close()}</button>
      </div>
      <nav class="tabs lower">
        ${this.panels.map((p) => html`<button class="tab">${p}</button>`)}
        <button class="tab active">Visualization ${this.close()}</button>
        ${this.add()}
      </nav>
      <section class="analysis">
        <spectrogram-view></spectrogram-view>
        <frequency-scale></frequency-scale>
        <level-meters></level-meters>
        <phase-scope></phase-scope>
      </section>
    </main>`;
  }
}
